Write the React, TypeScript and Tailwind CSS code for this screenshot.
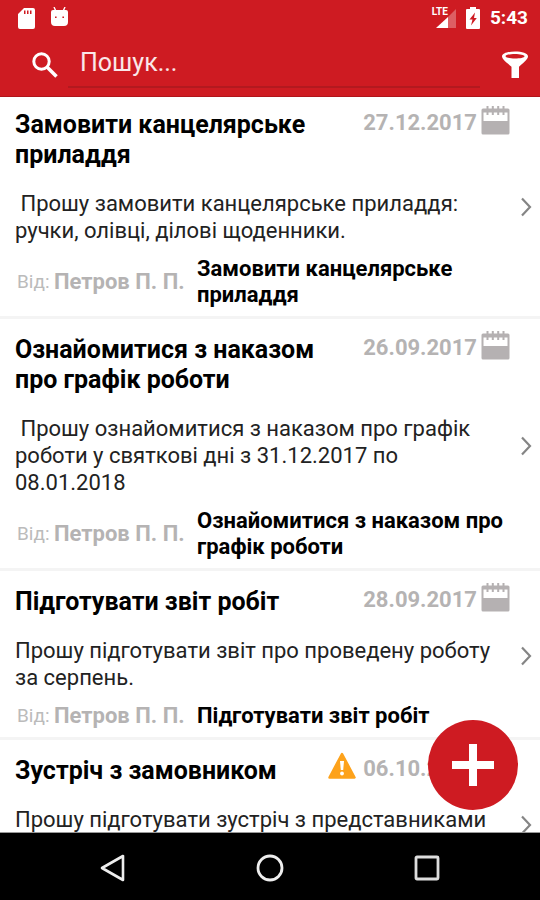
import React from "react";

type Task = {
  title: string;
  date: string;
  text: string;
  author: string;
  subject: string;
  urgent?: boolean;
};

const tasks: Task[] = [
  {
    title: "Замовити канцелярське приладдя",
    date: "27.12.2017",
    text: " Прошу замовити канцелярське приладдя: ручки, олівці, ділові щоденники.",
    author: "Петров П. П.",
    subject: "Замовити канцелярське приладдя",
  },
  {
    title: "Ознайомитися з наказом про графік роботи",
    date: "26.09.2017",
    text: " Прошу ознайомитися з наказом про графік роботи у святкові дні з 31.12.2017 по 08.01.2018",
    author: "Петров П. П.",
    subject: "Ознайомитися з наказом про графік роботи",
  },
  {
    title: "Підготувати звіт робіт",
    date: "28.09.2017",
    text: "Прошу підготувати звіт про проведену роботу за серпень.",
    author: "Петров П. П.",
    subject: "Підготувати звіт робіт",
  },
  {
    title: "Зустріч з замовником",
    date: "06.10.2017",
    text: "Прошу підготувати зустріч з представниками",
    author: "",
    subject: "",
    urgent: true,
  },
];

function StatusBar() {
  return (
    <div className="flex h-9 items-center justify-between pr-3 pl-[18px]">
      <div className="flex items-center gap-4">
        <svg className="h-[22px] w-[17px]" viewBox="0 0 17 22" aria-hidden="true">
          <path
            fill="#fff"
            fillRule="evenodd"
            d="M6 1h9a2 2 0 0 1 2 2v17a2 2 0 0 1-2 2H2a2 2 0 0 1-2-2V7zM6 3.500v3.500h1.500V3.500zM9 3.500v3.500h1.500V3.500zM12 3.500v3.500h1.500V3.500z"
          />
        </svg>
        <svg className="h-[22px] w-[17px]" viewBox="0 0 17 22" aria-hidden="true">
          <path d="M3 0l1.800 4M14 0l-1.800 4" stroke="#fff" strokeWidth="1.400" />
          <path
            fill="#fff"
            fillRule="evenodd"
            d="M2 3h13a2 2 0 0 1 2 2v10a4 4 0 0 1-4 4H4a4 4 0 0 1-4-4V5a2 2 0 0 1 2-2zM4 9.400V11h1.600V9.400zM11.400 9.400V11H13V9.400z"
          />
        </svg>
      </div>
      <div className="flex items-center">
        <div className="flex items-start">
          <span className="-mr-3 text-[10px] leading-[10px] font-bold text-white">LTE</span>
          <svg className="h-[22px] w-[20px]" viewBox="0 0 20 22" aria-hidden="true">
            <path d="M20 2v19H12V10z" fill="#fff" opacity=".3" />
            <path d="M12 10v11H0z" fill="#fff" />
          </svg>
        </div>
        <svg className="mx-[10px] h-[22px] w-[14px]" viewBox="0 0 14 22" aria-hidden="true">
          <path
            fill="#fff"
            fillRule="evenodd"
            d="M4 0h6v2h3a1 1 0 0 1 1 1v18a1 1 0 0 1-1 1H1a1 1 0 0 1-1-1V3a1 1 0 0 1 1-1h3zM9 5.500L3.500 12.500h3L5 18.500L10.800 11H8z"
          />
        </svg>
        <span className="text-[19px] leading-6 font-bold">5:43</span>
      </div>
    </div>
  );
}

function SearchBar() {
  return (
    <div className="flex h-[60px] items-start pr-3 pl-8">
      <label htmlFor="search" className="mt-4 w-9" aria-label="Пошук">
        <svg className="size-[26px]" viewBox="0 0 26 26" fill="none" stroke="#fff" aria-hidden="true">
          <circle cx="9.500" cy="9.500" r="7.700" strokeWidth="3" />
          <path d="M15 15l9.500 9.500" strokeWidth="3.600" />
        </svg>
      </label>
      <input
        id="search"
        type="text"
        placeholder="Пошук..."
        className="h-[52px] min-w-0 flex-1 border-b-2 border-[#b3191f] bg-transparent px-3 pt-[2px] text-[25px] leading-8 text-white outline-none placeholder:text-white/90"
      />
      <button type="button" aria-label="Фільтр" className="mt-[15px] ml-[22px]">
        <svg className="h-7 w-[26px]" viewBox="0 0 26 28" aria-hidden="true">
          <path
            fill="#fff"
            fillRule="evenodd"
            d="M13 0.500c7 0 13 1.800 13 4.800 0 2.500-3 5-9 10.500V27h-7.500V15.800C3 10.300 0 7.800 0 5.300 0 2.300 6 .5 13 .5zM13 3C8 3 3.500 4 3.500 5.300S8 7.600 13 7.600s9.500-1 9.500-2.300S18 3 13 3z"
          />
        </svg>
      </button>
    </div>
  );
}

function CalendarIcon() {
  return (
    <svg className="h-[29px] w-[29px]" viewBox="0 0 29 29" aria-hidden="true">
      <path
        fill="#b5b1b2"
        fillRule="evenodd"
        d="M2 2.500h25a1.500 1.500 0 0 1 1.500 1.500v23a1.500 1.500 0 0 1-1.500 1.500H2A1.500 1.500 0 0 1 .5 27V4A1.500 1.500 0 0 1 2 2.500zM2.500 6.500v8.500h24V6.500z"
      />
      <path d="M6.500 0v9M11.800 0v9M17.200 0v9M22.500 0v9" stroke="#b5b1b2" strokeWidth="2" />
    </svg>
  );
}

function TaskCard({ task }: { task: Task }) {
  return (
    <li className="flex min-h-[169px] border-b-[3px] border-[#f4f4f4] pl-[15px]">
      <div className="min-w-0 flex-1 pt-4 pb-2">
        <div className="flex items-start justify-between">
          <h2 className="min-w-0 flex-1 pr-4 text-[25px] leading-[30px] font-bold text-black">{task.title}</h2>
          <div className="-mt-1 flex items-start">
            {task.urgent && (
              <svg className="mr-[7px] h-[27px] w-7" viewBox="0 0 28 27" role="img" aria-label="Терміново">
                <path d="M14 2L26.500 25.500h-25z" fill="#fda21b" stroke="#fda21b" strokeWidth="2.500" strokeLinejoin="round" />
                <path d="M12 9h4l-.8 9h-2.400z" fill="#fff" />
                <circle cx="14" cy="21.500" r="1.900" fill="#fff" />
              </svg>
            )}
            <time className="mr-1 pt-1 text-[22px] leading-[26px] font-bold text-[#b5b3b3]">{task.date}</time>
            <CalendarIcon />
          </div>
        </div>
        <p className="mt-5 text-[22px] leading-[27px] whitespace-pre-wrap text-[#222]">{task.text}</p>
        {task.author && (
          <div className="mt-3 flex items-center text-[22px] leading-[26px] font-bold">
            <span className="w-[39px] shrink-0 pl-[2px] text-[19px] font-normal text-[#bbb]">Від:</span>
            <span className="w-[143px] shrink-0 whitespace-nowrap text-[#b5b3b3]">{task.author}</span>
            <span className="min-w-0 flex-1 text-black">{task.subject}</span>
          </div>
        )}
      </div>
      <div className="flex w-[30px] items-center justify-end pt-1 pr-2">
        <svg className="h-5 w-3" viewBox="0 0 12 20" fill="none" aria-hidden="true">
          <path d="M2 1.500l8 8.500-8 8.500" stroke="#858585" strokeWidth="2.200" />
        </svg>
      </div>
    </li>
  );
}

function NavigationBar() {
  return (
    <nav className="grid h-[67px] shrink-0 grid-cols-3 bg-black px-[34px] pt-[2px]">
      <button type="button" aria-label="Назад" className="flex items-center justify-center">
        <svg className="size-7" viewBox="0 0 28 28" fill="none" stroke="#eee" strokeWidth="2.600" strokeLinejoin="round">
          <path d="M24 2v24L3 14z" />
        </svg>
      </button>
      <button type="button" aria-label="Додому" className="flex items-center justify-center">
        <svg className="size-7" viewBox="0 0 28 28" fill="none" stroke="#eee" strokeWidth="2.800">
          <circle cx="14" cy="14" r="12" />
        </svg>
      </button>
      <button type="button" aria-label="Огляд" className="flex items-center justify-center">
        <svg className="size-7" viewBox="0 0 28 28" fill="none" stroke="#ddd" strokeWidth="2.800">
          <rect x="3" y="3" width="22" height="22" rx="1" />
        </svg>
      </button>
    </nav>
  );
}

export default function App() {
  return (
    <div className="flex h-screen flex-col bg-white font-['Roboto',sans-serif]">
      <header className="shrink-0 border-b border-[#b0151b] bg-[#ce1b22] text-white">
        <StatusBar />
        <SearchBar />
      </header>
      <main className="relative min-h-0 flex-1 overflow-hidden border-b border-[#999]">
        <ul className="-mt-[3px]">
          {tasks.map((task) => (
            <TaskCard key={task.title} task={task} />
          ))}
        </ul>
        <button
          type="button"
          aria-label="Додати"
          className="absolute right-[22px] bottom-[22px] flex size-[90px] items-center justify-center rounded-full bg-[#ce1b22]"
        >
          <svg className="size-[42px]" viewBox="0 0 42 42" aria-hidden="true">
            <path d="M21 0v42M0 21h42" stroke="#fff" strokeWidth="8" />
          </svg>
        </button>
      </main>
      <NavigationBar />
    </div>
  );
}
